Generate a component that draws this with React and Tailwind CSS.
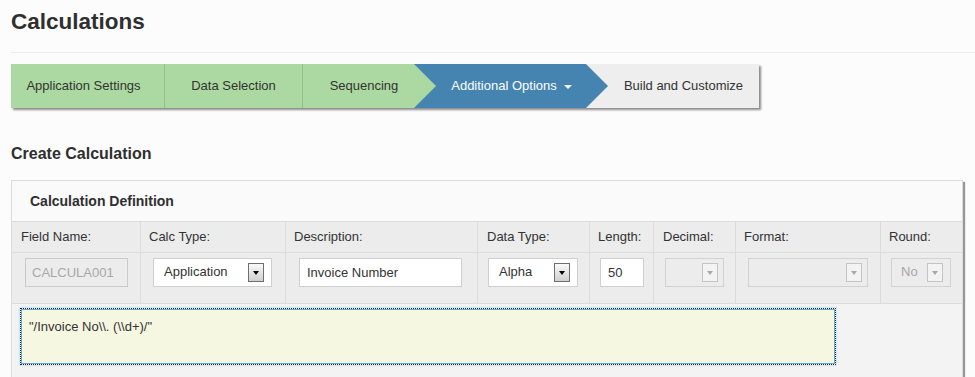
import React from 'react';

const arrowRight = 'polygon(0 0, calc(100% - 22px) 0, 100% 50%, calc(100% - 22px) 100%, 0 100%)';

const columns = [
    { label: 'Field Name:', width: 'w-[129px]', pad: 'pl-[9px]' },
    { label: 'Calc Type:', width: 'w-[145px]', pad: 'pl-[8px]' },
    { label: 'Description:', width: 'w-[192px]', pad: 'pl-[8px]' },
    { label: 'Data Type:', width: 'w-[112px]', pad: 'pl-[9px]' },
    { label: 'Length:', width: 'w-[64px]', pad: 'pl-[8px]' },
    { label: 'Decimal:', width: 'w-[82px]', pad: 'pl-[9px]' },
    { label: 'Format:', width: 'w-[145px]', pad: 'pl-[8px]' },
    { label: 'Round:', width: 'w-[81px]', pad: 'pl-[8px]' },
];

const DropButton = ({ disabled }) => (
    <span
        className={
            'flex items-center justify-center w-[16px] h-[19px] border ' +
            (disabled
                ? 'border-[#c4c4c4] bg-[#f3f3f3]'
                : 'border-[#6f6f6f] bg-gradient-to-b from-[#fafafa] to-[#cfcfcf]')
        }
    >
        <span
            className={
                'w-0 h-0 border-l-[3.5px] border-r-[3.5px] border-t-[4px] border-l-transparent border-r-transparent ' +
                (disabled ? 'border-t-[#a8a8a8]' : 'border-t-black')
            }
        ></span>
    </span>
);

const Select = ({ value, width, disabled, pl = 'pl-[10px]', pr = 'pr-[7px]' }) => (
    <div
        className={
            'flex items-center justify-between h-[29px] border ' +
            width + ' ' + pl + ' ' + pr + ' ' +
            (disabled ? 'bg-[#ececec] border-[#d2d2d2] text-[#a6a6a6]' : 'bg-white border-[#cfcfcf] text-[#333]')
        }
    >
        <span className="-mt-px">{value}</span>
        <DropButton disabled={disabled} />
    </div>
);

const TextBox = ({ value, width, disabled, pl = 'pl-[7px]' }) => (
    <div
        className={
            'flex items-center h-[29px] border ' + width + ' ' + pl + ' ' +
            (disabled ? 'bg-[#ececec] border-[#cbcbcb] text-[#a8a8a8]' : 'bg-white border-[#cfcfcf] text-[#333]')
        }
    >
        {value}
    </div>
);

export default function App() {
    return (
        <div className="min-h-[377px] bg-[#fcfcfc] pl-[11px] font-['Liberation_Sans',Arial,sans-serif] text-[#333] overflow-hidden">
            {/* Title */}
            <h1 className="pt-[8px] text-[22.5px] leading-[28px] font-bold text-[#2f2f2f]">Calculations</h1>
            <div className="mt-[16px] border-t border-[#ececec]"></div>

            {/* Wizard steps */}
            <div className="mt-[11px] inline-flex h-[44px] shadow-[2px_2px_2px_rgba(0,0,0,0.45)] text-[13px]">
                <div className="relative z-30 flex items-center justify-center w-[154px] pr-[8px] bg-[#acd9a1] border-r border-[#8fc385]">
                    Application Settings
                </div>
                <div className="relative z-30 flex items-center justify-center w-[138px] bg-[#acd9a1] border-r border-[#8fc385]">
                    Data Selection
                </div>
                <div
                    className="relative z-30 flex items-center justify-center w-[133px] pl-[11px] pr-[22px] bg-[#acd9a1]"
                    style={{ clipPath: arrowRight }}
                >
                    Sequencing
                </div>
                <div
                    className="relative z-20 -ml-[22px] flex items-center justify-center w-[194px] pl-[22px] pr-[21px] bg-[#4584b1] text-white"
                    style={{ clipPath: arrowRight }}
                >
                    Additional Options
                    <span className="ml-[7px] mt-px w-0 h-0 border-l-4 border-r-4 border-t-4 border-l-transparent border-r-transparent border-t-white"></span>
                </div>
                <div className="relative z-10 -ml-[21px] flex items-center justify-center w-[172px] pl-[21px] bg-[#eeeeee]">
                    Build and Customize
                </div>
            </div>

            {/* Section title */}
            <h2 className="mt-[36px] text-[16px] leading-[20px] font-bold text-[#2f2f2f]">Create Calculation</h2>

            {/* Panel */}
            <div className="mt-[16px] w-[952px] border border-[#dcdcdc] bg-[#f3f3f3] shadow-[2px_2px_1px_rgba(0,0,0,0.4)] text-[13px]">
                <div className="flex items-center h-[41px] pl-[18px] bg-[#fafafa] border-b border-[#dcdcdc] text-[14px] font-bold text-[#2f2f2f]">
                    Calculation Definition
                </div>

                <div className="flex h-[31px] bg-[#ececec] border-b border-[#dcdcdc]">
                    {columns.map((c, i) => (
                        <div
                            key={c.label}
                            className={
                                'flex items-center ' + c.width + ' ' + c.pad +
                                (i < columns.length - 1 ? ' border-r border-[#dcdcdc]' : '')
                            }
                        >
                            {c.label}
                        </div>
                    ))}
                </div>

                <div className="flex h-[51px] bg-[#ececec] border-b border-[#dcdcdc]">
                    <div className="w-[129px] pl-[13px] pt-[5px] border-r border-[#dcdcdc]">
                        <TextBox value="CALCULA001" width="w-[103px]" disabled pl="pl-[6px]" />
                    </div>
                    <div className="w-[145px] pl-[12px] pt-[5px] border-r border-[#dcdcdc]">
                        <Select value="Application" width="w-[119px]" />
                    </div>
                    <div className="w-[192px] pl-[13px] pt-[5px] border-r border-[#dcdcdc]">
                        <TextBox value="Invoice Number" width="w-[163px]" />
                    </div>
                    <div className="w-[112px] pl-[10px] pt-[5px] border-r border-[#dcdcdc]">
                        <Select value="Alpha" width="w-[90px]" />
                    </div>
                    <div className="w-[64px] pl-[10px] pt-[5px] border-r border-[#dcdcdc]">
                        <TextBox value="50" width="w-[44px]" />
                    </div>
                    <div className="w-[82px] pl-[11px] pt-[5px] border-r border-[#dcdcdc]">
                        <Select value="" width="w-[59px]" disabled pr="pr-[5px]" />
                    </div>
                    <div className="w-[145px] pl-[12px] pt-[5px] border-r border-[#dcdcdc]">
                        <Select value="" width="w-[120px]" disabled pr="pr-[5px]" />
                    </div>
                    <div className="w-[81px] pl-[10px] pt-[5px]">
                        <Select value="No" width="w-[60px]" disabled pl="pl-[9px]" pr="pr-[7px]" />
                    </div>
                </div>

                <div className="pl-[8px] pt-[4px] pb-[20px]">
                    <div className="w-[816px] h-[57px] pl-[8px] pt-[8px] bg-[#f5f7e1] border border-dotted border-[#222] shadow-[inset_0_0_0_1px_#58a9e6,0_0_2px_#8cc6f0] text-[13px] text-[#333]">
                        "/Invoice No\\. (\\d+)/"
                    </div>
                </div>
            </div>
        </div>
    );
}
